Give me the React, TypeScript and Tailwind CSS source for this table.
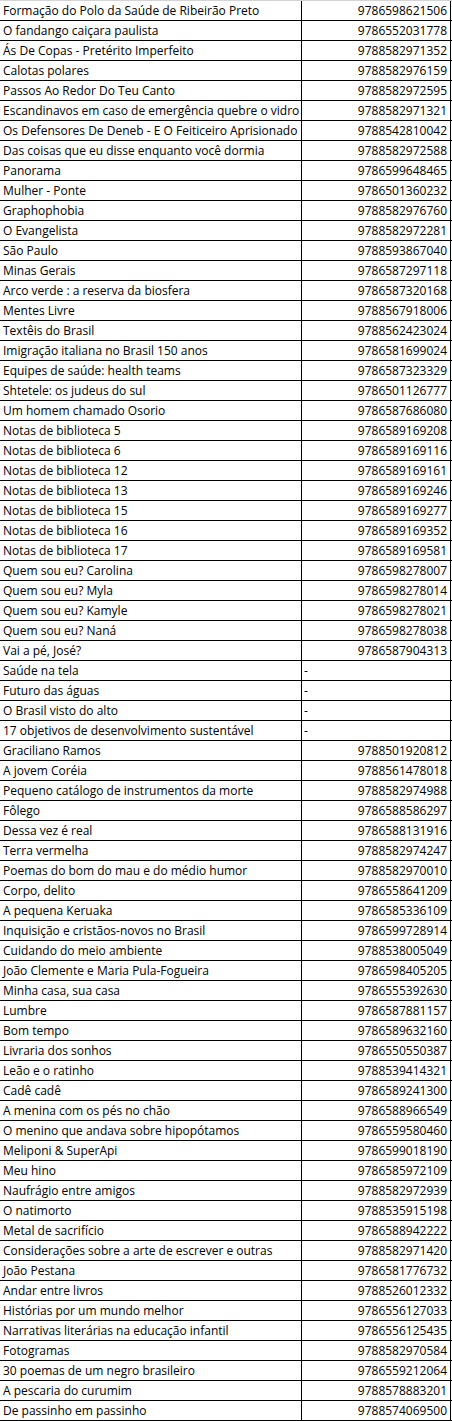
import React from 'react';

const rows: [string, string][] = [
  ['Formação do Polo da Saúde de Ribeirão Preto', '9786598621506'],
  ['O fandango caiçara paulista', '9786552031778'],
  ['Ás De Copas - Pretérito Imperfeito', '9788582971352'],
  ['Calotas polares', '9788582976159'],
  ['Passos Ao Redor Do Teu Canto', '9788582972595'],
  ['Escandinavos em caso de emergência quebre o vidro', '9788582971321'],
  ['Os Defensores De Deneb - E O Feiticeiro Aprisionado', '9788542810042'],
  ['Das coisas que eu disse enquanto você dormia', '9788582972588'],
  ['Panorama', '9786599648465'],
  ['Mulher - Ponte', '9786501360232'],
  ['Graphophobia', '9788582976760'],
  ['O Evangelista', '9788582972281'],
  ['São Paulo', '9788593867040'],
  ['Minas Gerais', '9786587297118'],
  ['Arco verde : a reserva da biosfera', '9786587320168'],
  ['Mentes Livre', '9788567918006'],
  ['Textêis do Brasil', '9788562423024'],
  ['Imigração italiana no Brasil 150 anos', '9786581699024'],
  ['Equipes de saúde: health teams', '9786587323329'],
  ['Shtetele: os judeus do sul', '9786501126777'],
  ['Um homem chamado Osorio', '9786587686080'],
  ['Notas de biblioteca 5', '9786589169208'],
  ['Notas de biblioteca 6', '9786589169116'],
  ['Notas de biblioteca 12', '9786589169161'],
  ['Notas de biblioteca 13', '9786589169246'],
  ['Notas de biblioteca 15', '9786589169277'],
  ['Notas de biblioteca 16', '9786589169352'],
  ['Notas de biblioteca 17', '9786589169581'],
  ['Quem sou eu? Carolina', '9786598278007'],
  ['Quem sou eu? Myla', '9786598278014'],
  ['Quem sou eu? Kamyle', '9786598278021'],
  ['Quem sou eu? Naná', '9786598278038'],
  ['Vai a pé, José?', '9786587904313'],
  ['Saúde na tela', '-'],
  ['Futuro das águas', '-'],
  ['O Brasil visto do alto', '-'],
  ['17 objetivos de desenvolvimento sustentável', '-'],
  ['Graciliano Ramos', '9788501920812'],
  ['A jovem Coréia', '9788561478018'],
  ['Pequeno catálogo de instrumentos da morte', '9788582974988'],
  ['Fôlego', '9786588586297'],
  ['Dessa vez é real', '9786588131916'],
  ['Terra vermelha', '9788582974247'],
  ['Poemas do bom do mau e do médio humor', '9788582970010'],
  ['Corpo, delito', '9786558641209'],
  ['A pequena Keruaka', '9786585336109'],
  ['Inquisição e cristãos-novos no Brasil', '9786599728914'],
  ['Cuidando do meio ambiente', '9788538005049'],
  ['João Clemente e Maria Pula-Fogueira', '9786598405205'],
  ['Minha casa, sua casa', '9786555392630'],
  ['Lumbre', '9786587881157'],
  ['Bom tempo', '9786589632160'],
  ['Livraria dos sonhos', '9786550550387'],
  ['Leão e o ratinho', '9788539414321'],
  ['Cadê cadê', '9786589241300'],
  ['A menina com os pés no chão', '9786588966549'],
  ['O menino que andava sobre hipopótamos', '9786559580460'],
  ['Meliponi & SuperApi', '9786599018190'],
  ['Meu hino', '9786585972109'],
  ['Naufrágio entre amigos', '9788582972939'],
  ['O natimorto', '9788535915198'],
  ['Metal de sacrifício', '9786588942222'],
  ['Considerações sobre a arte de escrever e outras', '9788582971420'],
  ['João Pestana', '9786581776732'],
  ['Andar entre livros', '9788526012332'],
  ['Histórias por um mundo melhor', '9786556127033'],
  ['Narrativas literárias na educação infantil', '9786556125435'],
  ['Fotogramas', '9788582970584'],
  ['30 poemas de um negro brasileiro', '9786559212064'],
  ['A pescaria do curumim', '9788578883201'],
  ['De passinho em passinho', '9788574069500'],
];

export default function App() {
  return (
    <div
      className="w-[452px] bg-white text-black border-t border-[#d4d4d4]"
      style={{ fontFamily: '"Open Sans", sans-serif' }}
    >
      {rows.map(([title, isbn], i) => (
        <div key={i} className="flex h-5 border-b border-black text-[12px] leading-[18px]">
          {/* title cell: clipped like a spreadsheet cell */}
          <div className="w-[302px] shrink-0 overflow-hidden whitespace-nowrap border-r border-black pl-[3px] pt-px">
            {title}
          </div>
          <div
            className={`w-[149px] shrink-0 border-r border-black pt-px ${
              isbn === '-' ? 'text-left pl-[2px]' : 'text-right pr-[3px]'
            }`}
          >
            {isbn}
          </div>
        </div>
      ))}
    </div>
  );
}
